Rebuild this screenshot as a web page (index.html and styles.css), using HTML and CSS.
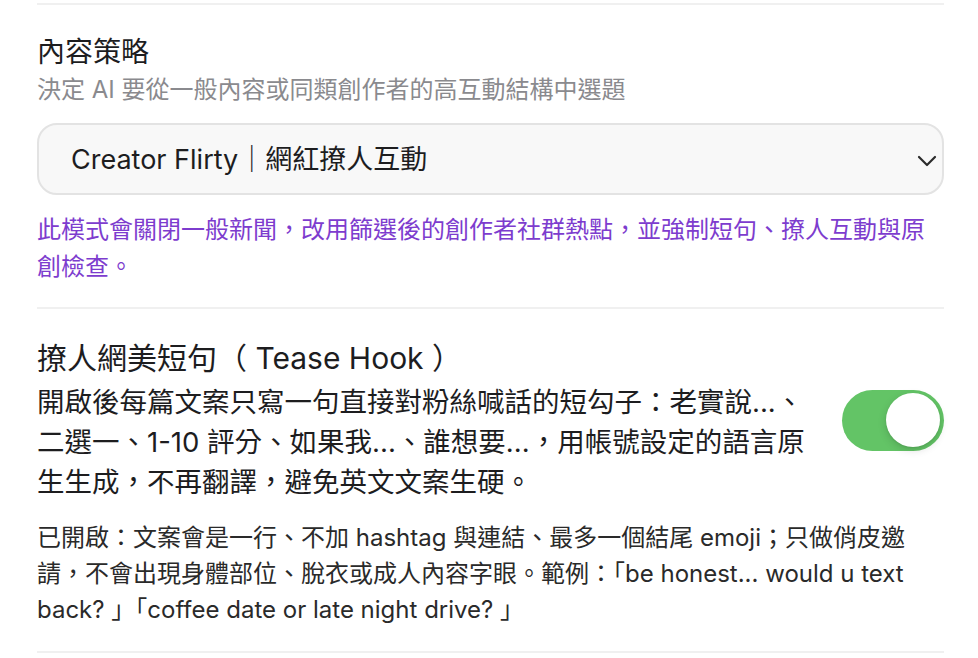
FILE: index.html
```html
<!DOCTYPE html>
<html lang="zh-Hant">
<head>
  <meta charset="utf-8">
  <title>內容設定</title>
  <meta name="viewport" content="width=device-width, initial-scale=1.0">
  <link rel="stylesheet" href="styles.css">
</head>
<body>
  <div class="settings">

    <!-- Content strategy -->
    <div class="section">
      <h2 class="section-title">內容策略</h2>
      <p class="section-sub">決定 AI 要從一般內容或同類創作者的高互動結構中選題</p>
      <div class="select-wrap">
        <select class="select">
          <option>General｜一般內容</option>
          <option selected>Creator Flirty｜網紅撩人互動</option>
        </select>
        <svg class="chevron" width="20" height="12" viewBox="0 0 20 12">
          <path d="M2 2 L10 10 L18 2" fill="none" stroke="#2b2b2b" stroke-width="2.2" stroke-linecap="round" stroke-linejoin="round"/>
        </svg>
      </div>
      <p class="hint">此模式會關閉一般新聞，改用篩選後的創作者社群熱點，並強制短句、撩人互動與原創檢查。</p>
    </div>

    <!-- Tease hook toggle -->
    <div class="section">
      <div class="toggle-row">
        <div class="toggle-text">
          <h3 class="toggle-title">撩人網美短句（ Tease Hook ）</h3>
          <p class="toggle-desc">開啟後每篇文案只寫一句直接對粉絲喊話的短勾子：老實說...、二選一、1-10 評分、如果我...、誰想要...，用帳號設定的語言原生生成，不再翻譯，避免英文文案生硬。</p>
        </div>
        <label class="switch">
          <input type="checkbox" checked>
          <span class="slider"></span>
        </label>
      </div>
      <p class="note">已開啟：文案會是一行、不加 hashtag 與連結、最多一個結尾 emoji；只做俏皮邀請，不會出現身體部位、脫衣或成人內容字眼。範例：「be honest... would u text back? 」「coffee date or late night drive? 」</p>
    </div>

  </div>
</body>
</html>
```

FILE: styles.css
```css
body {
  margin: 0;
  padding: 3px 0 0 0;
  background: #ffffff;
  font-family: Inter, "Noto Sans CJK TC", sans-serif;
  color: #1d1d1f;
}
.settings {
  width: 907px;
  margin-left: 37px;
}
.section {
  border-top: 2px solid #f0f0f0;
  padding: 29px 0 22px 0;
}
.section + .section {
  border-bottom: 2px solid #f0f0f0;
  padding-top: 29px;
  padding-bottom: 23px;
}
.section-title {
  margin: 0;
  font-size: 28px;
  font-weight: 400;
  line-height: 36px;
  color: #1d1d1f;
}
.section-sub {
  margin: 4px 0 0 0;
  font-size: 24px;
  line-height: 32px;
  color: #8a8a8e;
}
.select-wrap {
  position: relative;
  margin-top: 17px;
}
.select {
  -webkit-appearance: none;
  appearance: none;
  width: 100%;
  height: 72px;
  box-sizing: border-box;
  padding: 0 60px 0 32px;
  background: #f8f8f8;
  border: 2px solid #e3e3e3;
  border-radius: 20px;
  font-family: Inter, "Noto Sans CJK TC", sans-serif;
  font-size: 27px;
  color: #1d1d1f;
  outline: none;
}
.chevron {
  position: absolute;
  right: 7px;
  top: 32px;
  pointer-events: none;
}
.hint {
  margin: 16px 0 0 0;
  font-size: 24px;
  line-height: 37px;
  color: #7d3cce;
}
.toggle-row {
  display: flex;
  align-items: center;
  gap: 24px;
}
.toggle-text {
  flex: 1;
}
.toggle-title {
  margin: 0;
  font-size: 30px;
  font-weight: 400;
  line-height: 40px;
  color: #1d1d1f;
}
.toggle-desc {
  margin: 4px 0 0 0;
  font-size: 27.5px;
  line-height: 40px;
  color: #1d1d1f;
}
.switch {
  position: relative;
  width: 102px;
  height: 61px;
  flex-shrink: 0;
  cursor: pointer;
}
.switch input {
  display: none;
}
.slider {
  position: absolute;
  inset: 0;
  background: #d9d9d9;
  border-radius: 31px;
  transition: 0.2s;
}
.slider::before {
  content: "";
  position: absolute;
  width: 54px;
  height: 54px;
  top: 3.5px;
  left: 4px;
  background: #ffffff;
  border-radius: 50%;
  box-shadow: 0 3px 8px rgba(0,0,0,0.15), 0 1px 2px rgba(0,0,0,0.08);
  transition: 0.2s;
}
.switch input:checked + .slider {
  background: #63c466;
}
.switch input:checked + .slider::before {
  left: 44px;
}
.note {
  margin: 18px 0 0 0;
  max-width: 880px;
  font-size: 24px;
  line-height: 36px;
  color: #2a2a2a;
}
```
